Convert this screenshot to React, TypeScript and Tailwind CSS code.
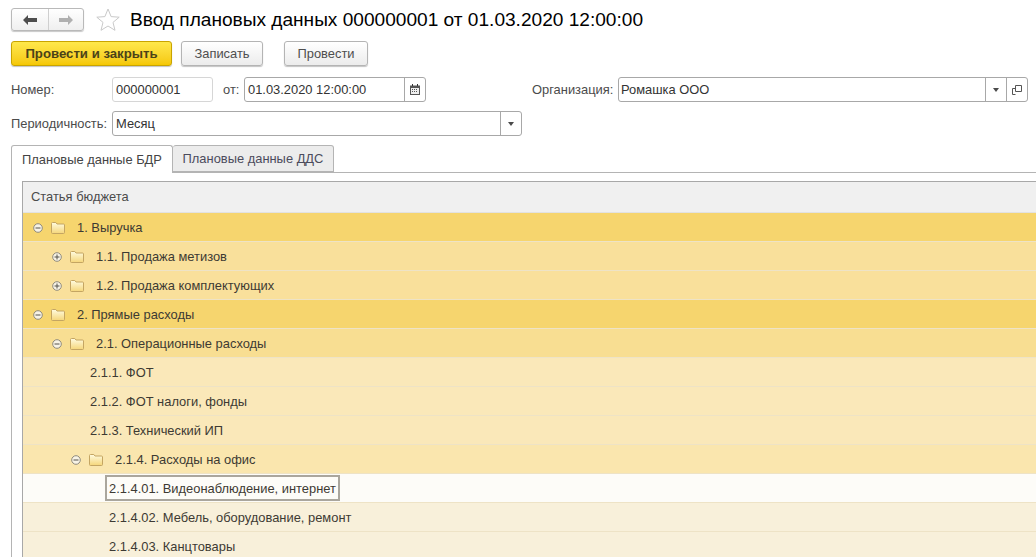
import { ReactNode } from 'react';

type Row = { text: string; pad: number; bg: string; toggle?: 'minus' | 'plus'; selected?: boolean };

const rows: Row[] = [
  { text: '1. Выручка', pad: 10, bg: 'bg-[#f6d56e]', toggle: 'minus' },
  { text: '1.1. Продажа метизов', pad: 29, bg: 'bg-[#f9e09b]', toggle: 'plus' },
  { text: '1.2. Продажа комплектующих', pad: 29, bg: 'bg-[#f9e09b]', toggle: 'plus' },
  { text: '2. Прямые расходы', pad: 10, bg: 'bg-[#f6d56e]', toggle: 'minus' },
  { text: '2.1. Операционные расходы', pad: 29, bg: 'bg-[#f8de92]', toggle: 'minus' },
  { text: '2.1.1. ФОТ', pad: 67, bg: 'bg-[#fae8b9]' },
  { text: '2.1.2. ФОТ налоги, фонды', pad: 67, bg: 'bg-[#fae8b9]' },
  { text: '2.1.3. Технический ИП', pad: 67, bg: 'bg-[#fae8b9]' },
  { text: '2.1.4. Расходы на офис', pad: 48, bg: 'bg-[#fae6ae]', toggle: 'minus' },
  { text: '2.1.4.01. Видеонаблюдение, интернет', pad: 86, bg: 'bg-[#fdfcf8]', selected: true },
  { text: '2.1.4.02. Мебель, оборудование, ремонт', pad: 86, bg: 'bg-[#f8f0da]' },
  { text: '2.1.4.03. Канцтовары', pad: 86, bg: 'bg-[#f8f0da]' },
];

function Toggle({ kind }: { kind: 'minus' | 'plus' }) {
  return (
    <svg width="10" height="10" viewBox="0 0 10 10" className="shrink-0 -mt-px">
      <circle cx="5" cy="5" r="4.3" fill="#f7f3e6" stroke="#8f8a7c" strokeWidth="1" />
      <path d="M2.5 5h5" stroke="#55534c" strokeWidth="1" />
      {kind === 'plus' && <path d="M5 2.5v5" stroke="#55534c" strokeWidth="1" />}
    </svg>
  );
}

function Folder() {
  return (
    <svg width="14" height="12" viewBox="0 0 14 12" className="shrink-0 -mt-px">
      <defs>
        <linearGradient id="folderFill" x1="0" y1="0" x2="0" y2="1">
          <stop offset="0" stopColor="#fffbe0" />
          <stop offset="1" stopColor="#f5d67a" />
        </linearGradient>
      </defs>
      <path d="M.5 1.5Q.5.5 1.5.5h3.3l1.2 1.5h6.5q1 0 1 1v7.5q0 1-1 1h-11q-1 0-1-1z" fill="url(#folderFill)" stroke="#c4a562" strokeWidth="1" />
    </svg>
  );
}

function Dropdown() {
  return (
    <svg width="6" height="4" viewBox="0 0 6 4">
      <path d="M0 0h6L3 4z" fill="#4a4a4a" />
    </svg>
  );
}

function Button({ children, className }: { children: ReactNode; className: string }) {
  return (
    <div className={`h-[25px] flex items-center justify-center rounded-[3px] border border-[#b4b4b4] bg-gradient-to-b from-white to-[#ececec] shadow-[0_1px_1px_#c4c4c4] text-[#4e4e4e] ${className}`}>
      {children}
    </div>
  );
}

export default function App() {
  return (
    <div className="w-[1036px] h-[557px] overflow-hidden bg-white text-[12.9px] leading-[14px] text-[#4b4b4b] font-['Liberation_Sans','Noto_Sans_CJK_SC',sans-serif]">
      {/* шапка */}
      <div className="flex items-center h-[23px] mt-2 ml-[11px]">
        <div className="w-[73px] h-[23px] flex rounded-[3px] border border-[#b9b9b9] bg-gradient-to-b from-white to-[#efefef] shadow-[0_1px_1px_#c8c8c8]">
          <div className="w-[37px] flex items-center justify-center border-r border-[#cfcfcf]">
            <svg width="14" height="10" viewBox="0 0 14 10"><path d="M0 5l5-5v3h9v4H5v3z" fill="#4d4d4d" /></svg>
          </div>
          <div className="flex-1 flex items-center justify-center">
            <svg width="14" height="10" viewBox="0 0 14 10"><path d="M14 5L9 0v3H0v4h9v3z" fill="#b0b0b0" /></svg>
          </div>
        </div>
        <svg width="24" height="23" viewBox="0 0 24 23" className="ml-3">
          <path d="M12 1l3.1 7.6 8.1.6-6.2 5.2 2 7.9L12 18l-7 4.3 2-7.9L.8 9.2l8.1-.6z" fill="#fff" stroke="#c9c9c9" strokeWidth="1" />
        </svg>
        <div className="ml-[10px] text-[19.1px] leading-[22px] text-black whitespace-nowrap">Ввод плановых данных 000000001 от 01.03.2020 12:00:00</div>
      </div>

      {/* команды */}
      <div className="flex mt-[10px] ml-[11px]">
        <div className="w-[161px] h-[25px] flex items-center justify-center rounded-[3px] border border-[#c9a400] bg-gradient-to-b from-[#ffe84a] to-[#f5c800] shadow-[0_1px_1px_#c4c4c4] font-bold text-[13.2px] text-[#4a4218]">Провести и закрыть</div>
        <Button className="w-[82px] ml-[9px]">Записать</Button>
        <Button className="w-[84px] ml-[21px]">Провести</Button>
      </div>

      {/* поля */}
      <div className="flex items-center h-[25px] mt-[11px] ml-[11px]">
        <div className="w-[101px]">Номер:</div>
        <div className="w-[101px] h-[25px] flex items-center px-[3px] rounded-[3px] border border-[#d6d6d6] text-[#333]">000000001</div>
        <div className="ml-[10px] w-[21px]">от:</div>
        <div className="w-[182px] h-[25px] flex items-center rounded-[3px] border border-[#a8a8a8] text-[#333]">
          <div className="flex-1 px-[3px]">01.03.2020 12:00:00</div>
          <div className="w-[21px] h-full flex items-center justify-center border-l border-[#a8a8a8]">
            <svg width="10" height="11" viewBox="0 0 10 11">
              <path d="M0 1.5h10V11H0z" fill="#555" />
              <path d="M2 0h1v2H2zM7 0h1v2H7z" fill="#333" />
              <path d="M1 4h8v6H1z" fill="#eee" />
              <path d="M2 5h1v1H2zM4 5h1v1H4zM6 5h1v1H6zM2 7h1v1H2zM4 7h1v1H4zM6 7h1v1H6z" fill="#555" />
            </svg>
          </div>
        </div>
        <div className="ml-[106px] w-[86px] whitespace-nowrap">Организация:</div>
        <div className="w-[410px] h-[25px] flex items-center rounded-[3px] border border-[#a8a8a8] text-[#333]">
          <div className="flex-1 px-[2px]">Ромашка ООО</div>
          <div className="w-[21px] h-full flex items-center justify-center border-l border-[#a8a8a8]"><Dropdown /></div>
          <div className="w-[21px] h-full flex items-center justify-center border-l border-[#a8a8a8]">
            <svg width="10" height="10" viewBox="0 0 10 10" fill="none" stroke="#555" strokeWidth="1">
              <path d="M3.5.5h6v6h-6z" />
              <path d="M3.5 3.5H.5v6M.5 9.5h3" />
            </svg>
          </div>
        </div>
      </div>
      <div className="flex items-center h-[25px] mt-[9px] ml-[11px]">
        <div className="w-[101px] whitespace-nowrap">Периодичность:</div>
        <div className="w-[410px] h-[25px] flex items-center rounded-[3px] border border-[#a8a8a8] text-[#333]">
          <div className="flex-1 px-[3px]">Месяц</div>
          <div className="w-[21px] h-full flex items-center justify-center border-l border-[#a8a8a8]"><Dropdown /></div>
        </div>
      </div>

      {/* вкладки */}
      <div className="flex items-end h-[27px] mt-[9px] ml-[11px] relative z-10">
        <div className="w-[162px] h-[28px] -mb-px flex items-center justify-center bg-white rounded-t-[3px] border border-b-0 border-[#b4b4b4] text-[#444]">Плановые данные БДР</div>
        <div className="w-[161px] h-[27px] flex items-center justify-center bg-[#ececec] rounded-t-[3px] border border-l-0 border-[#b4b4b4] text-[#4b4b5c]">Плановые данные ДДС</div>
      </div>
      <div className="ml-[11px] border-l border-t border-[#b4b4b4] pl-[10px] pt-[8px]">
        <div className="border-l border-t border-[#a8a8a8]">
          <div className="h-[31px] flex items-center pl-2 bg-[#f0f0f0] border-b border-[#e2e2e2]">Статья бюджета</div>
          {rows.map(r => (
            <div key={r.text} className={`h-[29px] flex items-center border-b border-[#eee3c6] text-[#3d3a33] ${r.selected ? '' : 'pt-[2px]'} ${r.bg}`} style={{ paddingLeft: r.pad }}>
              {r.toggle && (
                <>
                  <Toggle kind={r.toggle} />
                  <div className="w-2 shrink-0" />
                  <Folder />
                  <div className="w-3 shrink-0" />
                </>
              )}
              {r.selected ? (
                <div className="h-[26px] w-[235px] -ml-1 flex items-center pl-[2px] pt-px border-2 border-[#aaa69d] whitespace-nowrap">{r.text}</div>
              ) : (
                <div className="whitespace-nowrap">{r.text}</div>
              )}
            </div>
          ))}
        </div>
      </div>
    </div>
  );
}
